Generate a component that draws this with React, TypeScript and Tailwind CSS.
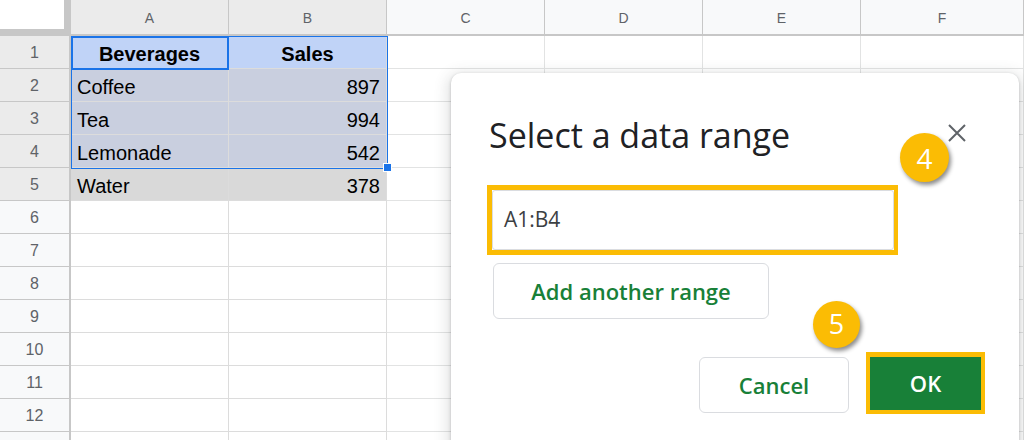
import React from 'react';

const columns = ['A', 'B', 'C', 'D', 'E', 'F'];

const rows: { num: number; a: string; b: string; tone: string }[] = [
  { num: 1, a: 'Beverages', b: 'Sales', tone: 'head' },
  { num: 2, a: 'Coffee', b: '897', tone: 'sel' },
  { num: 3, a: 'Tea', b: '994', tone: 'sel' },
  { num: 4, a: 'Lemonade', b: '542', tone: 'sel' },
  { num: 5, a: 'Water', b: '378', tone: 'gray' },
  ...Array.from({ length: 8 }, (_, i) => ({ num: i + 6, a: '', b: '', tone: 'none' })),
];

const toneBg: Record<string, string> = {
  head: 'bg-[#c0d3f7]',
  sel: 'bg-[#c9cfdf]',
  gray: 'bg-[#d9d9d9]',
  none: 'bg-white',
};

const Badge: React.FC<{ n: string; className: string }> = ({ n, className }) => (
  <div
    className={`absolute rounded-full bg-[#fbbc04] text-white flex items-center justify-center shadow-[2px_3px_4px_rgba(0,0,0,0.45)] font-['Open_Sans',sans-serif] ${className}`}
  >
    {n}
  </div>
);

const App: React.FC = () => {
  return (
    <div className="relative w-[1024px] h-[440px] overflow-hidden bg-white font-['Liberation_Sans',Arial,sans-serif]">
      {/* sheet grid */}
      <div className="relative grid grid-cols-[71px_repeat(5,158px)_1fr] grid-rows-[36px_repeat(13,33px)]">
        <div className="bg-white border-r-[7px] border-b-[7px] border-[#c7c7c7]" />
        {columns.map((c, i) => (
          <div
            key={c}
            className={`flex items-center justify-center pt-[2px] text-[14px] text-[#5f6368] border-r border-b-2 border-[#c7c7c7] ${i < 2 ? 'bg-[#ebebeb]' : 'bg-[#f8f9fa]'}`}
          >
            {c}
          </div>
        ))}

        {rows.map((r) => (
          <React.Fragment key={r.num}>
            <div
              className={`flex items-center justify-center pt-[1px] text-[16px] text-[#5f6368] border-r-2 border-b border-[#c7c7c7] ${r.num <= 5 ? 'bg-[#ebebeb]' : 'bg-[#f8f9fa]'}`}
            >
              {r.num <= 12 ? r.num : ''}
            </div>
            <div
              className={`flex items-center px-[6px] pt-[3px] text-[20px] text-black border-r border-b border-[#dcdcdc] ${toneBg[r.tone]} ${r.tone === 'head' ? 'justify-center font-bold' : ''}`}
            >
              {r.a}
            </div>
            <div
              className={`flex items-center px-[6px] pt-[3px] text-[20px] text-black border-r border-b border-[#dcdcdc] ${toneBg[r.tone]} ${r.tone === 'head' ? 'justify-center font-bold' : 'justify-end'}`}
            >
              {r.b}
            </div>
            {[0, 1, 2, 3].map((k) => (
              <div key={k} className="border-r border-b border-[#e2e3e3] bg-white" />
            ))}
          </React.Fragment>
        ))}

        {/* selection A1:B4 */}
        <div className="absolute left-[71px] top-[36px] w-[317px] h-[133px] border border-[#1a73e8] pointer-events-none" />
        <div className="absolute left-[71px] top-[36px] w-[158px] h-[34px] border-2 border-[#1a73e8] pointer-events-none" />
        <div className="absolute left-[383px] top-[163px] w-[9px] h-[9px] bg-[#1a73e8] border border-white" />
      </div>

      {/* dialog */}
      <div className="absolute left-[451px] top-[73px] w-[568px] h-[420px] rounded-[10px] bg-white shadow-[0_1px_3px_rgba(60,64,67,0.3),0_4px_14px_4px_rgba(60,64,67,0.15)] pl-[36px] pr-[34px] pt-[40px] font-['Open_Sans',sans-serif]">
        <div className="flex items-center justify-between h-[40px]">
          <h2 className="pl-[2px] text-[34px] leading-[40px] text-[#202124] translate-y-[2px]">Select a data range</h2>
          <button className="mr-[16px] w-[24px] h-[24px] flex items-center justify-center">
            <svg width="18" height="18" viewBox="0 0 18 18" fill="none">
              <path d="M1 1L17 17M17 1L1 17" stroke="#5f6368" strokeWidth="2" />
            </svg>
          </button>
        </div>

        <div className="mt-[32px] w-[411px] h-[70px] border-[5px] border-r-[4px] border-[#fbbc04]">
          <div className="h-full border border-[#dadce0] rounded-[3px] flex items-center pl-[11px] text-[21px] text-[#3c4043]">
            A1:B4
          </div>
        </div>

        <button className="mt-[8px] ml-[6px] w-[276px] h-[56px] border border-[#dadce0] rounded-[6px] text-[#188038] text-[22px] font-semibold flex items-center justify-center">
          Add another range
        </button>

        <div className="mt-[33px] flex justify-end items-end gap-[17px]">
          <button className="mb-[1px] w-[150px] h-[56px] border border-[#dadce0] rounded-[6px] text-[#188038] text-[22px] font-semibold flex items-center justify-center">
            Cancel
          </button>
          <div className="border-[4px] border-t-[5px] border-[#fbbc04]">
            <button className="w-[111px] h-[53px] bg-[#188038] text-white text-[22px] font-semibold flex items-center justify-center">
              OK
            </button>
          </div>
        </div>
      </div>

      <Badge n="4" className="left-[900px] top-[133px] w-[49px] h-[49px] text-[28px]" />
      <Badge n="5" className="left-[813px] top-[301px] w-[47px] h-[47px] text-[27px]" />
    </div>
  );
};

export default App;
